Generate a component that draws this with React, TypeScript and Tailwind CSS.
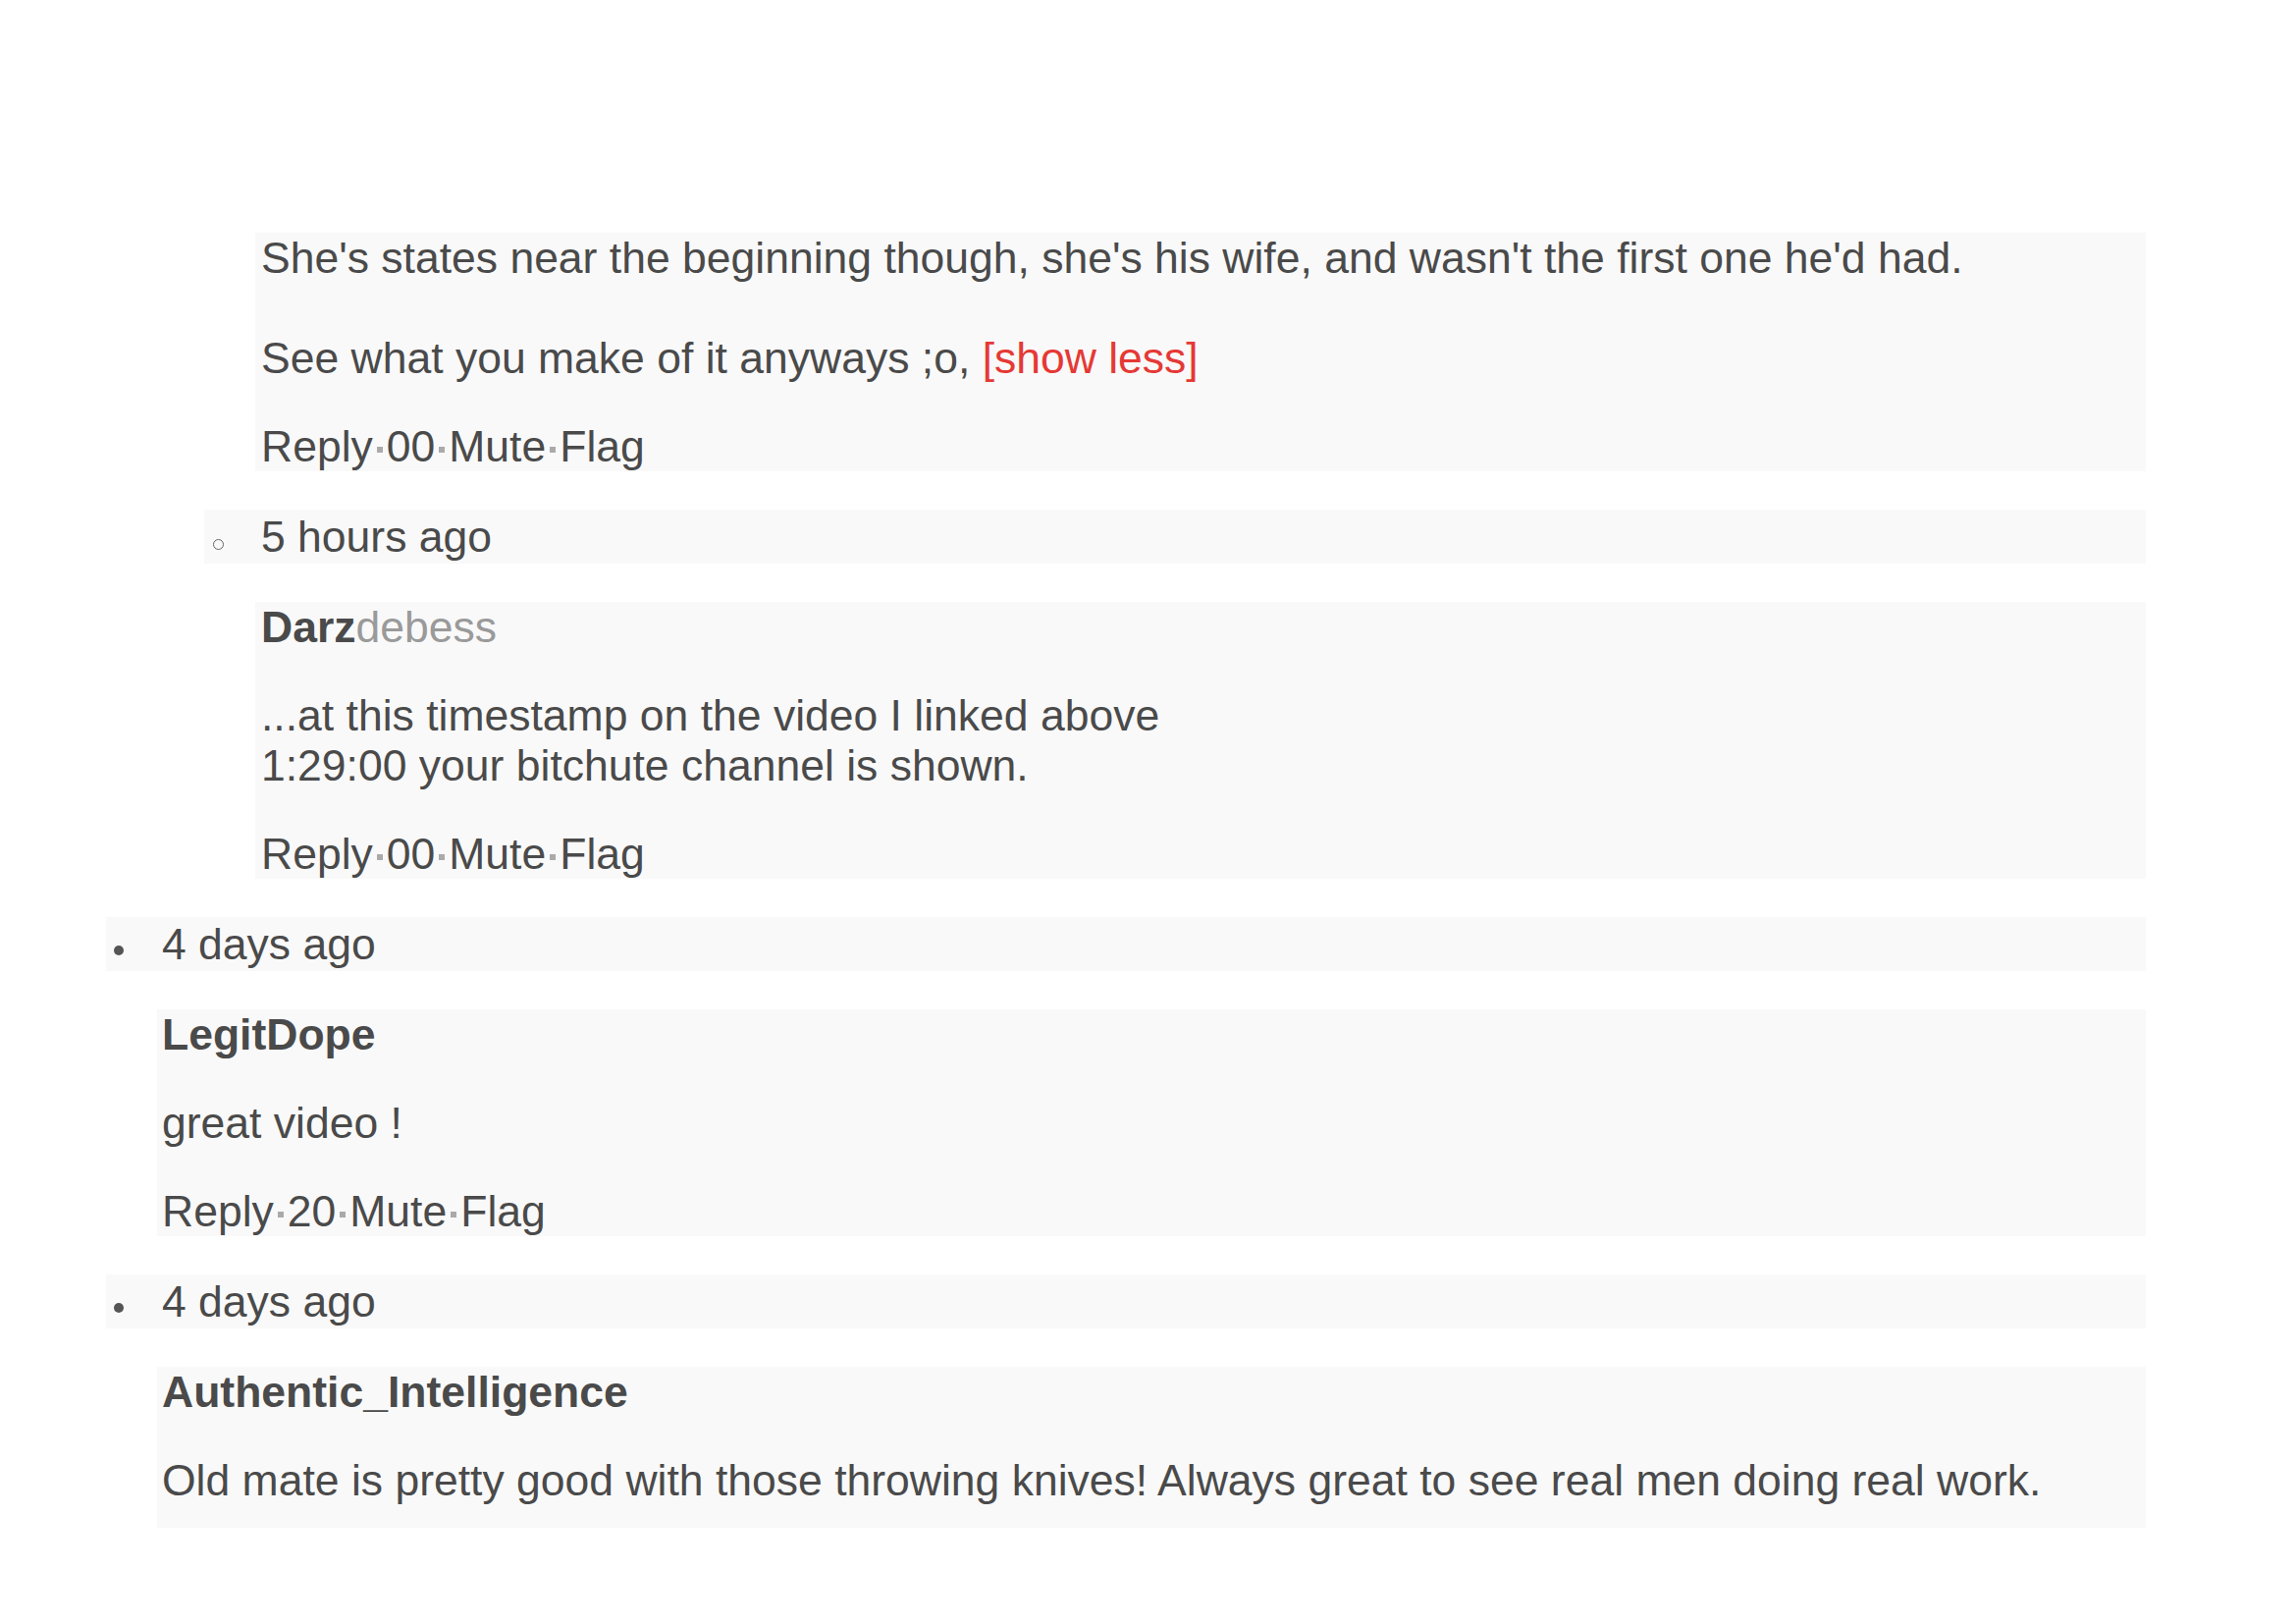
import React from 'react'

interface Comment {
  id: number
  time?: string
  name?: React.ReactNode
  body: React.ReactNode
  votes?: string
  nested?: boolean
  last?: boolean
}

function Dot() {
  return <span className="inline-block w-[6px] h-[6px] bg-[#aaaaaa] mx-[4px] align-middle" />
}

function Actions({ votes }: { votes: string }) {
  return (
    <div className="whitespace-nowrap">
      <span>Reply</span><Dot /><span>{votes}</span><Dot /><span>Mute</span><Dot /><span>Flag</span>
    </div>
  )
}

function TimeBar({ time, nested }: { time: string; nested?: boolean }) {
  return (
    <div className={`flex items-center h-[55px] bg-[#f9f9f9] ${nested ? 'ml-[100px]' : ''}`}>
      {nested ? (
        <span className="w-[11px] h-[11px] rounded-full border border-[#666] ml-[9px] mt-[16px] flex-shrink-0" />
      ) : (
        <span className="w-[10px] h-[10px] rounded-full bg-[#555] ml-[8px] mt-[12px] flex-shrink-0" />
      )}
      <span className={nested ? 'ml-[38px]' : 'ml-[39px]'}>{time}</span>
    </div>
  )
}

function Body({ c }: { c: Comment }) {
  return (
    <div className={`flex flex-col gap-[39px] bg-[#f9f9f9] ${c.nested ? 'ml-[152px] pl-[6px]' : 'ml-[52px] pl-[5px]'} ${c.last ? 'pb-[23px]' : ''}`}>
      {c.name && <div>{c.name}</div>}
      <div>{c.body}</div>
      {c.votes && <Actions votes={c.votes} />}
    </div>
  )
}

const comments: Comment[] = [
  {
    id: 1,
    nested: true,
    votes: '00',
    body: (
      <>
        She's states near the beginning though, she's his wife, and wasn't the first one he'd had.
        <br />
        <br />
        See what you make of it anyways ;o, <span className="text-[#e53935]">[show less]</span>
      </>
    ),
  },
  {
    id: 2,
    nested: true,
    time: '5 hours ago',
    votes: '00',
    name: <><span className="font-bold">Darz</span><span className="text-[#9a9a9a]">debess</span></>,
    body: (
      <>
        ...at this timestamp on the video I linked above
        <br />
        1:29:00 your bitchute channel is shown.
      </>
    ),
  },
  {
    id: 3,
    time: '4 days ago',
    votes: '20',
    name: <span className="font-bold">LegitDope</span>,
    body: 'great video !',
  },
  {
    id: 4,
    time: '4 days ago',
    last: true,
    name: <span className="font-bold">Authentic_Intelligence</span>,
    body: 'Old mate is pretty good with those throwing knives! Always great to see real men doing real work.',
  },
]

export default function App() {
  return (
    <div className="min-h-[1654px] bg-white pt-[237px] text-[#4a4a4a] text-[44.5px] leading-[51px]"
      style={{ fontFamily: '"Liberation Sans", Arial, sans-serif' }}>
      <div className="ml-[108px] w-[2078px] flex flex-col gap-[39px]">
        {comments.map(c => (
          <React.Fragment key={c.id}>
            {c.time && <TimeBar time={c.time} nested={c.nested} />}
            <Body c={c} />
          </React.Fragment>
        ))}
      </div>
    </div>
  )
}
